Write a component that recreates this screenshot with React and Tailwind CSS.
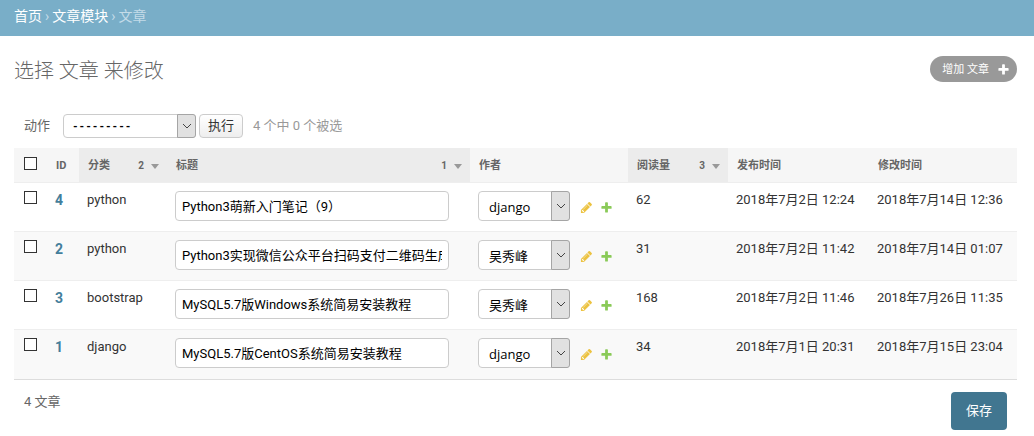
import { useState } from "react";

const articles = [
  { id: 4, category: "python", title: "Python3萌新入门笔记（9）", author: "django", reads: 62, published: "2018年7月2日 12:24", modified: "2018年7月14日 12:36" },
  { id: 2, category: "python", title: "Python3实现微信公众平台扫码支付二维码生成", author: "吴秀峰", reads: 31, published: "2018年7月2日 11:42", modified: "2018年7月14日 01:07" },
  { id: 3, category: "bootstrap", title: "MySQL5.7版Windows系统简易安装教程", author: "吴秀峰", reads: 168, published: "2018年7月2日 11:46", modified: "2018年7月26日 11:35" },
  { id: 1, category: "django", title: "MySQL5.7版CentOS系统简易安装教程", author: "django", reads: 34, published: "2018年7月1日 20:31", modified: "2018年7月15日 23:04" },
];

const columns = [
  { label: "ID" },
  { label: "分类", order: 2 },
  { label: "标题", order: 1 },
  { label: "作者" },
  { label: "阅读量", order: 3 },
  { label: "发布时间" },
  { label: "修改时间" },
];

function SelectArrow() {
  return (
    <span className="pointer-events-none absolute inset-y-0 right-0 flex w-[19px] items-center justify-center rounded-r-[3px] border border-[#a5a5a5] bg-[#e1e1e1]">
      <svg className="h-[6px] w-[10px]" viewBox="0 0 10 6" fill="none" stroke="#444">
        <path d="M1 1l4 4 4-4" />
      </svg>
    </span>
  );
}

function Checkbox({ label, ...props }) {
  return (
    <input
      type="checkbox"
      aria-label={label}
      className="block size-[13px] appearance-none border border-[#333] bg-white checked:bg-[#417690]"
      {...props}
    />
  );
}

function PencilIcon() {
  return (
    <svg className="size-[13px]" viewBox="0 0 1792 1792" fill="#ecc23f">
      <path d="M491 1536l91-91-235-235-91 91v107h128v128h107zm523-928q0-22-22-22-10 0-17 7l-542 542q-7 7-7 17 0 22 22 22 10 0 17-7l542-542q7-7 7-17zm-54-192l416 416-832 832h-416v-416zm683 96q0 53-37 90l-166 166-416-416 166-165q36-38 90-38 53 0 91 38l235 234q37 39 37 91z" />
    </svg>
  );
}

function PlusIcon({ className, fill }) {
  return (
    <svg className={className} viewBox="0 0 1792 1792" fill={fill}>
      <path d="M1600 796v192q0 40-28 68t-68 28h-416v416q0 40-28 68t-68 28h-192q-40 0-68-28t-28-68v-416h-416q-40 0-68-28t-28-68v-192q0-40 28-68t68-28h416v-416q0-40 28-68t68-28h192q40 0 68 28t28 68v416h416q40 0 68 28t28 68z" />
    </svg>
  );
}

function HeaderCell({ label, order }) {
  return (
    <th scope="col" className={`h-[34px] pl-[9px] pr-2 pt-[3px] text-left ${order ? "bg-[#ececec]" : ""}`}>
      <div className="flex items-center justify-between">
        <a href="#" className="text-[11px] font-bold text-[#666]">
          {label}
        </a>
        {order && (
          <span className="flex items-center gap-[7px] text-[10px]">
            {order}
            <svg className="h-[5px] w-[8px]" viewBox="0 0 8 5" fill="#999">
              <path d="M0 0h8L4 5z" />
            </svg>
          </span>
        )}
      </div>
    </th>
  );
}

function ArticleRow({ article, checked, onToggle }) {
  return (
    <tr className="h-[49px] border-b border-[#eee] align-top leading-[18px] odd:bg-white even:bg-[#f9f9f9] last:h-[50px] last:border-[#ddd]">
      <td className="pl-[10px] pt-2">
        <Checkbox label={`选择 ${article.id}`} checked={checked} onChange={onToggle} />
      </td>
      <td className="px-2 pt-2">
        <a href="#" className="text-sm leading-[18px] font-bold text-[#447e9b]">{article.id}</a>
      </td>
      <td className="px-2 pt-2">{article.category}</td>
      <td className="px-2 pt-2">
        <input
          type="text"
          aria-label="标题"
          defaultValue={article.title}
          className="block h-[30px] w-[274px] rounded-[4px] border border-[#ccc] bg-white px-[6px] text-black"
        />
      </td>
      <td className="px-2 pt-2">
        <div className="flex items-center">
          <div className="relative mr-[10px]">
            <select
              aria-label="作者"
              defaultValue={article.author}
              className="block h-[30px] w-[92px] appearance-none rounded-[4px] border border-[#ccc] bg-white pl-[10px] pt-[2px] font-['Open_Sans','Noto_Sans_CJK_SC',sans-serif] text-black"
            >
              <option>django</option>
              <option>吴秀峰</option>
            </select>
            <SelectArrow />
          </div>
          <div className="flex gap-[7px] pt-[3px]">
            <a href="#" aria-label="修改作者"><PencilIcon /></a>
            <a href="#" aria-label="增加作者"><PlusIcon className="size-[13px]" fill="#8aca58" /></a>
          </div>
        </div>
      </td>
      <td className="px-2 pt-2">{article.reads}</td>
      <td className="whitespace-nowrap px-2 pt-2">{article.published}</td>
      <td className="whitespace-nowrap px-2 pt-2">{article.modified}</td>
    </tr>
  );
}

export default function App() {
  const [selected, setSelected] = useState([]);

  const toggle = (id) =>
    setSelected((ids) => (ids.includes(id) ? ids.filter((i) => i !== id) : [...ids, id]));

  const allSelected = selected.length === articles.length;

  return (
    <div className="bg-white font-['Roboto','Noto_Sans_CJK_SC',sans-serif] text-[13px] leading-4 text-[#333]">
      <nav className="flex h-9 items-center gap-[3px] bg-[#79aec8] px-[14px] pb-1 text-sm text-[#c4dce8]">
        <a href="#" className="text-white">首页</a>
        <span>›</span>
        <a href="#" className="text-white">文章模块</a>
        <span>›</span>
        <span>文章</span>
      </nav>

      <main className="pl-[14px] pr-[17px] pt-5">
        <div className="flex items-start justify-between">
          <h1 className="pt-[3px] text-[20px] font-light leading-6 text-[#666]">选择 文章 来修改</h1>
          <a href="#" className="flex h-[26px] items-center gap-2 rounded-full bg-[#999] pl-3 pr-[7px] text-[11px] text-white">
            <span className="pt-[2px]">增加 文章</span>
            <PlusIcon className="size-[13px]" fill="#fff" />
          </a>
        </div>

        <form onSubmit={(e) => e.preventDefault()}>
          <div className="mt-[31px] flex items-center pl-[10px] text-[#666]">
            <label htmlFor="action" className="mr-[13px]">动作</label>
            <div className="relative mr-[3px]">
              <select
                id="action"
                className="block h-6 w-[133px] appearance-none rounded-[4px] border border-[#ccc] bg-white pl-2 font-['Liberation_Mono',monospace] text-[11px] font-bold text-black"
              >
                <option>---------</option>
                <option>删除所选的 文章</option>
              </select>
              <SelectArrow />
            </div>
            <button className="h-6 rounded-[4px] border border-[#ccc] bg-linear-to-b from-white to-[#eee] px-2 text-[#333]">
              执行
            </button>
            <span className="ml-[10px] text-[#999]">4 个中 {selected.length} 个被选</span>
          </div>

          <table className="mt-[10px] w-full table-fixed border-collapse">
            <colgroup>
              <col className="w-[33px]" />
              <col className="w-[32px]" />
              <col className="w-[88px]" />
              <col className="w-[303px]" />
              <col className="w-[158px]" />
              <col className="w-[100px]" />
              <col className="w-[141px]" />
              <col />
            </colgroup>
            <thead className="border-b border-[#eee] bg-[#f6f6f6] text-[#666]">
              <tr>
                <th scope="col" className="pb-[3px] pl-[10px]">
                  <Checkbox
                    label="全选"
                    checked={allSelected}
                    onChange={() => setSelected(allSelected ? [] : articles.map((a) => a.id))}
                  />
                </th>
                {columns.map((column) => (
                  <HeaderCell key={column.label} {...column} />
                ))}
              </tr>
            </thead>
            <tbody>
              {articles.map((article) => (
                <ArticleRow
                  key={article.id}
                  article={article}
                  checked={selected.includes(article.id)}
                  onToggle={() => toggle(article.id)}
                />
              ))}
            </tbody>
          </table>

          <div className="flex items-start justify-between px-[10px] pb-[6px] pt-3 text-[#666]">
            <p className="pt-[2px]">4 文章</p>
            <button className="h-[38px] rounded-[4px] bg-[#417690] px-[15px] text-white">保存</button>
          </div>
        </form>
      </main>
    </div>
  );
}
